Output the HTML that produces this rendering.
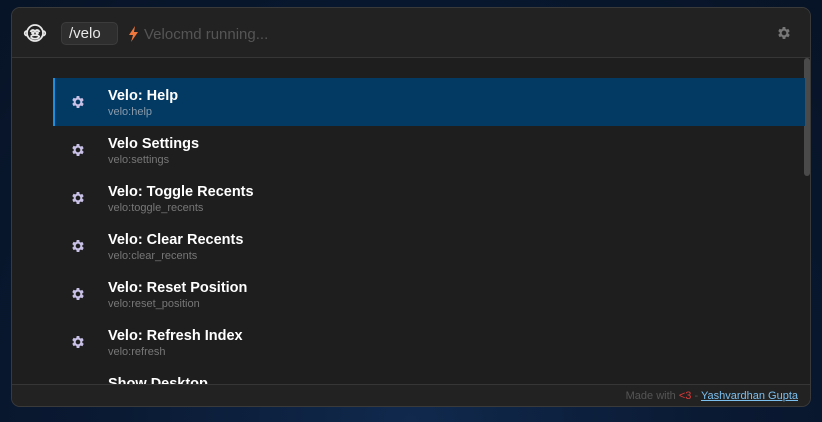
<!DOCTYPE html>
<html><head><style>
*{margin:0;padding:0;box-sizing:border-box}
html,body{width:822px;height:422px;overflow:hidden}
body{background:radial-gradient(ellipse at 50% 100%,#10294d 0%,#0a1a33 50%,#071326 100%);font-family:"Liberation Sans",sans-serif;position:relative}
.win{position:absolute;left:11px;top:7px;width:800px;height:400px;background:#1e1e1e;border:1px solid #3a3a3a;border-radius:9px;overflow:hidden}
.hdr{position:absolute;left:0;top:0;width:100%;height:50px;background:#222;border-bottom:1px solid #363636}
.pill{position:absolute;left:49px;top:14px;width:57px;height:23px;border-radius:5px;background:#2e2e2e;border:1px solid #3c3c3c;color:#e8e8e8;font-size:15px;line-height:21px;padding-left:7px}
.run{position:absolute;left:132px;top:18px;color:#555;font-size:15px}
.row{position:absolute;left:41px;width:752px;height:48px}
.row.sel{background:#023a63;box-shadow:inset 2px 0 0 #1b8fe0}
.row .t{position:absolute;left:55px;top:10px;color:#fff;font-weight:bold;font-size:14.5px}
.row .s{position:absolute;left:55px;top:28px;color:#777;font-size:11px}
.row.sel .s{color:#8a9aaa}
.row svg{position:absolute;left:17px;top:16px}
.sb{position:absolute;left:792px;top:50px;width:6px;height:118px;background:#4a4a4a;border-radius:3px}
.ftr{position:absolute;left:0;top:376px;width:100%;height:24px;background:#222;border-top:1px solid #363636;font-size:11px;color:#555;text-align:right;padding-right:12px;line-height:22px}
.ftr b{color:#e03a3a;font-weight:normal}
.ftr a{color:#7cc0f0;text-decoration:underline}
</style></head><body>
<div class="win">
<div class="hdr">
<svg style="position:absolute;left:11px;top:13px" width="24" height="24" viewBox="0 0 24 24" fill="none" stroke="#e8e8e8" stroke-width="1.8"><circle cx="12" cy="12" r="8"/><path d="M4 10a2.2 2.2 0 0 0 0 4.5M20 10a2.2 2.2 0 0 1 0 4.5"/><path d="M7.5 11c1.2-2.5 3.3-2.5 4.5-.5c1.2-2 3.3-2 4.5.5M7.8 15.5c1.2 3 7.2 3 8.4 0c-1.2-1.8-7.2-1.8-8.4 0"/><circle cx="9.8" cy="12" r=".7" fill="#e8e8e8"/><circle cx="14.2" cy="12" r=".7" fill="#e8e8e8"/></svg>
<div class="pill">/velo</div>
<svg style="position:absolute;left:117px;top:18px" width="9" height="16" viewBox="0 0 9 16"><path d="M6 0L0 9h4l-2 7 7-10H5z" fill="#f2763a"/></svg>
<div class="run">Velocmd running...</div>
<svg style="position:absolute;left:764px;top:17px" width="16" height="16" viewBox="0 0 24 24"><path fill="#777" d="M19.4 13a7.5 7.5 0 0 0 0-2l2.1-1.6-2-3.5-2.5 1a7.6 7.6 0 0 0-1.7-1L15 3h-4l-.4 2.7a7.6 7.6 0 0 0-1.7 1l-2.5-1-2 3.5L6.6 11a7.5 7.5 0 0 0 0 2l-2.2 1.6 2 3.5 2.5-1a7.6 7.6 0 0 0 1.7 1L11 21h4l.4-2.7a7.6 7.6 0 0 0 1.7-1l2.5 1 2-3.5zM13 15.5a3.5 3.5 0 1 1 0-7 3.5 3.5 0 0 1 0 7z" transform="translate(-1 0)"/></svg>
</div>
<div class="sb"></div>

<div class="row sel" style="top:70px"><svg width="16" height="16" viewBox="0 0 24 24"><path fill="#c9c0e6" d="M19.4 13a7.5 7.5 0 0 0 0-2l2.1-1.6-2-3.5-2.5 1a7.6 7.6 0 0 0-1.7-1L15 3h-4l-.4 2.7a7.6 7.6 0 0 0-1.7 1l-2.5-1-2 3.5L6.6 11a7.5 7.5 0 0 0 0 2l-2.2 1.6 2 3.5 2.5-1a7.6 7.6 0 0 0 1.7 1L11 21h4l.4-2.7a7.6 7.6 0 0 0 1.7-1l2.5 1 2-3.5zM13 15.5a3.5 3.5 0 1 1 0-7 3.5 3.5 0 0 1 0 7z" transform="translate(-1 0)"/></svg><div class="t">Velo: Help</div><div class="s">velo:help</div></div>
<div class="row" style="top:118px"><svg width="16" height="16" viewBox="0 0 24 24"><path fill="#c9c0e6" d="M19.4 13a7.5 7.5 0 0 0 0-2l2.1-1.6-2-3.5-2.5 1a7.6 7.6 0 0 0-1.7-1L15 3h-4l-.4 2.7a7.6 7.6 0 0 0-1.7 1l-2.5-1-2 3.5L6.6 11a7.5 7.5 0 0 0 0 2l-2.2 1.6 2 3.5 2.5-1a7.6 7.6 0 0 0 1.7 1L11 21h4l.4-2.7a7.6 7.6 0 0 0 1.7-1l2.5 1 2-3.5zM13 15.5a3.5 3.5 0 1 1 0-7 3.5 3.5 0 0 1 0 7z" transform="translate(-1 0)"/></svg><div class="t">Velo Settings</div><div class="s">velo:settings</div></div>
<div class="row" style="top:166px"><svg width="16" height="16" viewBox="0 0 24 24"><path fill="#c9c0e6" d="M19.4 13a7.5 7.5 0 0 0 0-2l2.1-1.6-2-3.5-2.5 1a7.6 7.6 0 0 0-1.7-1L15 3h-4l-.4 2.7a7.6 7.6 0 0 0-1.7 1l-2.5-1-2 3.5L6.6 11a7.5 7.5 0 0 0 0 2l-2.2 1.6 2 3.5 2.5-1a7.6 7.6 0 0 0 1.7 1L11 21h4l.4-2.7a7.6 7.6 0 0 0 1.7-1l2.5 1 2-3.5zM13 15.5a3.5 3.5 0 1 1 0-7 3.5 3.5 0 0 1 0 7z" transform="translate(-1 0)"/></svg><div class="t">Velo: Toggle Recents</div><div class="s">velo:toggle_recents</div></div>
<div class="row" style="top:214px"><svg width="16" height="16" viewBox="0 0 24 24"><path fill="#c9c0e6" d="M19.4 13a7.5 7.5 0 0 0 0-2l2.1-1.6-2-3.5-2.5 1a7.6 7.6 0 0 0-1.7-1L15 3h-4l-.4 2.7a7.6 7.6 0 0 0-1.7 1l-2.5-1-2 3.5L6.6 11a7.5 7.5 0 0 0 0 2l-2.2 1.6 2 3.5 2.5-1a7.6 7.6 0 0 0 1.7 1L11 21h4l.4-2.7a7.6 7.6 0 0 0 1.7-1l2.5 1 2-3.5zM13 15.5a3.5 3.5 0 1 1 0-7 3.5 3.5 0 0 1 0 7z" transform="translate(-1 0)"/></svg><div class="t">Velo: Clear Recents</div><div class="s">velo:clear_recents</div></div>
<div class="row" style="top:262px"><svg width="16" height="16" viewBox="0 0 24 24"><path fill="#c9c0e6" d="M19.4 13a7.5 7.5 0 0 0 0-2l2.1-1.6-2-3.5-2.5 1a7.6 7.6 0 0 0-1.7-1L15 3h-4l-.4 2.7a7.6 7.6 0 0 0-1.7 1l-2.5-1-2 3.5L6.6 11a7.5 7.5 0 0 0 0 2l-2.2 1.6 2 3.5 2.5-1a7.6 7.6 0 0 0 1.7 1L11 21h4l.4-2.7a7.6 7.6 0 0 0 1.7-1l2.5 1 2-3.5zM13 15.5a3.5 3.5 0 1 1 0-7 3.5 3.5 0 0 1 0 7z" transform="translate(-1 0)"/></svg><div class="t">Velo: Reset Position</div><div class="s">velo:reset_position</div></div>
<div class="row" style="top:310px"><svg width="16" height="16" viewBox="0 0 24 24"><path fill="#c9c0e6" d="M19.4 13a7.5 7.5 0 0 0 0-2l2.1-1.6-2-3.5-2.5 1a7.6 7.6 0 0 0-1.7-1L15 3h-4l-.4 2.7a7.6 7.6 0 0 0-1.7 1l-2.5-1-2 3.5L6.6 11a7.5 7.5 0 0 0 0 2l-2.2 1.6 2 3.5 2.5-1a7.6 7.6 0 0 0 1.7 1L11 21h4l.4-2.7a7.6 7.6 0 0 0 1.7-1l2.5 1 2-3.5zM13 15.5a3.5 3.5 0 1 1 0-7 3.5 3.5 0 0 1 0 7z" transform="translate(-1 0)"/></svg><div class="t">Velo: Refresh Index</div><div class="s">velo:refresh</div></div>
<div class="row" style="top:358px"><div class="t">Show Desktop</div></div>

<div class="ftr">Made with <b>&lt;3</b> - <a>Yashvardhan Gupta</a></div>
</div>
</body></html>
